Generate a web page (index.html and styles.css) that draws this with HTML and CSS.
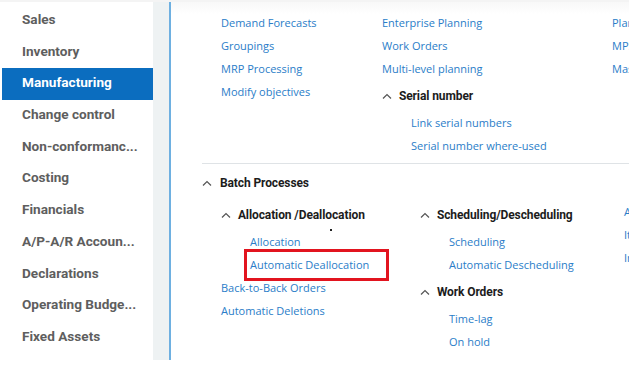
FILE: index.html
```html
<!DOCTYPE html>
<html lang="en">
  <head>
    <meta charset="UTF-8" />
    <meta name="viewport" content="width=device-width, initial-scale=1.0" />
    <title>Manufacturing</title>
    <link rel="stylesheet" href="styles.css">
  </head>
  <body>
    <div class="app">
      <!-- Module list -->
      <nav class="sidebar">
        <a class="nav-item">Sales</a>
        <a class="nav-item">Inventory</a>
        <a class="nav-item active">Manufacturing</a>
        <a class="nav-item">Change control</a>
        <a class="nav-item">Non-conformanc...</a>
        <a class="nav-item">Costing</a>
        <a class="nav-item">Financials</a>
        <a class="nav-item">A/P-A/R Accoun...</a>
        <a class="nav-item">Declarations</a>
        <a class="nav-item">Operating Budge...</a>
        <a class="nav-item">Fixed Assets</a>
      </nav>

      <div class="gutter"></div>

      <main class="content">
        <section class="top">
          <ul class="col">
            <li class="link">Demand Forecasts</li>
            <li class="link">Groupings</li>
            <li class="link">MRP Processing</li>
            <li class="link">Modify objectives</li>
          </ul>
          <div class="col">
            <ul>
              <li class="link">Enterprise Planning</li>
              <li class="link">Work Orders</li>
              <li class="link">Multi-level planning</li>
            </ul>
            <div class="subgroup">
              <h3 class="sub-title">
                <svg class="chev" viewBox="0 0 10 6"><polyline points="1,5.5 5,1.5 9,5.5" /></svg>
                Serial number
              </h3>
              <ul class="sub-links">
                <li class="link">Link serial numbers</li>
                <li class="link">Serial number where-used</li>
              </ul>
            </div>
          </div>
          <ul class="col">
            <li class="link">Planning Data</li>
            <li class="link">MPS Processing</li>
            <li class="link">Master Plan</li>
          </ul>
        </section>

        <hr class="divider">

        <section class="group">
          <h2 class="group-title">
            <svg class="chev" viewBox="0 0 10 6"><polyline points="1,5.5 5,1.5 9,5.5" /></svg>
            Batch Processes
          </h2>
          <div class="group-body">
            <div class="col col-a">
              <div class="subgroup">
                <h3 class="sub-title">
                  <svg class="chev" viewBox="0 0 10 6"><polyline points="1,5.5 5,1.5 9,5.5" /></svg>
                  Allocation /Deallocation
                </h3>
                <ul class="sub-links">
                  <li class="link">Allocation</li>
                  <li class="link callout">Automatic Deallocation</li>
                </ul>
              </div>
              <ul>
                <li class="link">Back-to-Back Orders</li>
                <li class="link">Automatic Deletions</li>
              </ul>
              <span class="speck"></span>
            </div>

            <div class="col">
              <div class="subgroup">
                <h3 class="sub-title">
                  <svg class="chev" viewBox="0 0 10 6"><polyline points="1,5.5 5,1.5 9,5.5" /></svg>
                  Scheduling/Descheduling
                </h3>
                <ul class="sub-links">
                  <li class="link">Scheduling</li>
                  <li class="link">Automatic Descheduling</li>
                </ul>
              </div>
              <div class="subgroup">
                <h3 class="sub-title">
                  <svg class="chev" viewBox="0 0 10 6"><polyline points="1,5.5 5,1.5 9,5.5" /></svg>
                  Work Orders
                </h3>
                <ul class="sub-links">
                  <li class="link">Time-lag</li>
                  <li class="link">On hold</li>
                  <li class="link">Remaining Work Orders</li>
                </ul>
              </div>
            </div>

            <ul class="col col-c">
              <li class="link">Assembly Orders</li>
              <li class="link">Item Groups</li>
              <li class="link">Inventory Allocation</li>
            </ul>
          </div>
        </section>
      </main>
    </div>
  </body>
</html>
```

FILE: styles.css
```css
body {
  margin: 0;
  padding: 0;
  background: #fff;
  font-family: "Open Sans", "Noto Sans", sans-serif;
  overflow: hidden;
}

ul {
  list-style: none;
  margin: 0;
  padding: 0;
}

h2,
h3 {
  margin: 0;
}

.app {
  display: flex;
  box-sizing: border-box;
  height: 360px;
  overflow: hidden;
  border-top: 2px solid #f4f4f4;
}

/* Module list */
.sidebar {
  flex: 0 0 151px;
  padding: 3px 0 0 2px;
  display: flex;
  flex-direction: column;
}

.nav-item {
  height: 31.7px;
  line-height: 28px;
  padding-left: 20px;
  font-family: Roboto, "Liberation Sans", sans-serif;
  font-weight: 700;
  font-size: 13.6px;
  color: #5e5e5e;
  white-space: nowrap;
  cursor: pointer;
}

.nav-item.active {
  background-color: #0b6dbf;
  color: #fff;
}

.gutter {
  flex: 0 0 16px;
  background-color: #eef2f3;
  border-right: 2px solid #6eb0e1;
}

/* Menu content */
.content {
  flex: 1;
  min-width: 0;
  padding: 9px 0 0 50px;
  background: linear-gradient(#f8f8f8, #fff 12px);
  white-space: nowrap;
}

.top {
  display: grid;
  grid-template-columns: 161px 230px 200px;
}

.link {
  height: 23px;
  line-height: 23px;
  font-size: 11px;
  color: #2a7dc8;
  cursor: pointer;
}

.chev {
  width: 10px;
  height: 6px;
  margin-right: 4px;
  fill: none;
  stroke: #555;
  stroke-width: 1.2;
  vertical-align: 1px;
}

.sub-title {
  height: 23px;
  line-height: 23px;
  padding: 5px 0 3px;
  font-family: Roboto, "Liberation Sans", sans-serif;
  font-size: 12px;
  font-weight: 700;
  color: #1c1c1c;
  letter-spacing: -0.1px;
}

.sub-links {
  padding-left: 29px;
}

.divider {
  border: 0;
  border-top: 1px solid #dfe3e6;
  margin: 6px 0 8px -19px;
}

.group-title {
  height: 23px;
  line-height: 23px;
  margin-left: -19px;
  font-family: Roboto, "Liberation Sans", sans-serif;
  font-size: 12px;
  font-weight: 700;
  color: #1c1c1c;
  letter-spacing: -0.1px;
}

.group-title .chev {
  margin-right: 5px;
}

.group-body {
  display: grid;
  grid-template-columns: 199px 200px 200px;
  margin-top: 4px;
}

.col-a {
  position: relative;
}

.col-c {
  padding: 1px 0 0 4px;
}

/* red annotation box around the highlighted entry */
.callout {
  position: relative;
}

.callout::after {
  content: "";
  position: absolute;
  left: -6px;
  top: -4px;
  width: 145px;
  height: 32px;
  box-sizing: border-box;
  border: 3px solid #e2141f;
}

.speck {
  position: absolute;
  left: 109px;
  top: 30px;
  width: 2px;
  height: 2px;
  background: #222;
}
```
